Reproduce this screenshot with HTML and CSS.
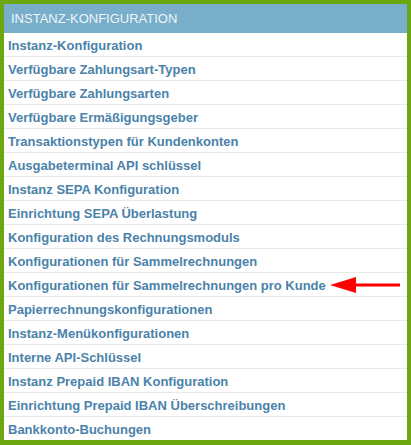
FILE: index.html
```html
<!DOCTYPE html>
<html lang="de">
<head>
  <title>Instanz-Konfiguration</title>
  <link rel="stylesheet" href="styles.css">
</head>
<body>
  <div class="panel">
    <div class="panel-head">INSTANZ-KONFIGURATION</div>
    <ul class="menu">
      <li><a href="#">Instanz-Konfiguration</a></li>
      <li><a href="#">Verfügbare Zahlungsart-Typen</a></li>
      <li><a href="#">Verfügbare Zahlungsarten</a></li>
      <li><a href="#">Verfügbare Ermäßigungsgeber</a></li>
      <li><a href="#">Transaktionstypen für Kundenkonten</a></li>
      <li><a href="#">Ausgabeterminal API schlüssel</a></li>
      <li><a href="#">Instanz SEPA Konfiguration</a></li>
      <li><a href="#">Einrichtung SEPA Überlastung</a></li>
      <li><a href="#">Konfiguration des Rechnungsmoduls</a></li>
      <li><a href="#">Konfigurationen für Sammelrechnungen</a></li>
      <li class="marked">
        <a href="#">Konfigurationen für Sammelrechnungen pro Kunde</a>
        <svg class="arrow" width="72" height="18" viewBox="0 0 72 18">
          <polygon points="0,9 26,1 26,17" fill="#ff0000"/>
          <rect x="24" y="7.5" width="46" height="3" fill="#ff0000"/>
        </svg>
      </li>
      <li><a href="#">Papierrechnungskonfigurationen</a></li>
      <li><a href="#">Instanz-Menükonfigurationen</a></li>
      <li><a href="#">Interne API-Schlüssel</a></li>
      <li><a href="#">Instanz Prepaid IBAN Konfiguration</a></li>
      <li><a href="#">Einrichtung Prepaid IBAN Überschreibungen</a></li>
      <li><a href="#">Bankkonto-Buchungen</a></li>
    </ul>
  </div>
</body>
</html>
```

FILE: styles.css
```css
body {
  margin: 0;
  font-family: "Liberation Sans", Arial, sans-serif;
  background-color: #ffffff;
}

.panel {
  width: 403px;
  height: 436px;
  border: 4px solid #6aa711;
  border-bottom-width: 5px;
  background-color: #ffffff;
  overflow: hidden;
}

.panel-head {
  height: 29px;
  line-height: 29px;
  padding-left: 7px;
  background-color: #78aec9;
  color: #eef6fa;
  font-size: 13px;
}

.menu {
  list-style: none;
  margin: 0;
  padding: 0;
}

.menu li {
  position: relative;
  height: 23px;
  line-height: 23px;
  padding-left: 4px;
  border-bottom: 1px solid #e9e9e9;
}

.menu li:last-child {
  border-bottom: none;
}

.menu a {
  color: #4a82aa;
  font-size: 13px;
  font-weight: bold;
  text-decoration: none;
}

.marked .arrow {
  position: absolute;
  left: 326px;
  top: 3px;
}
```
